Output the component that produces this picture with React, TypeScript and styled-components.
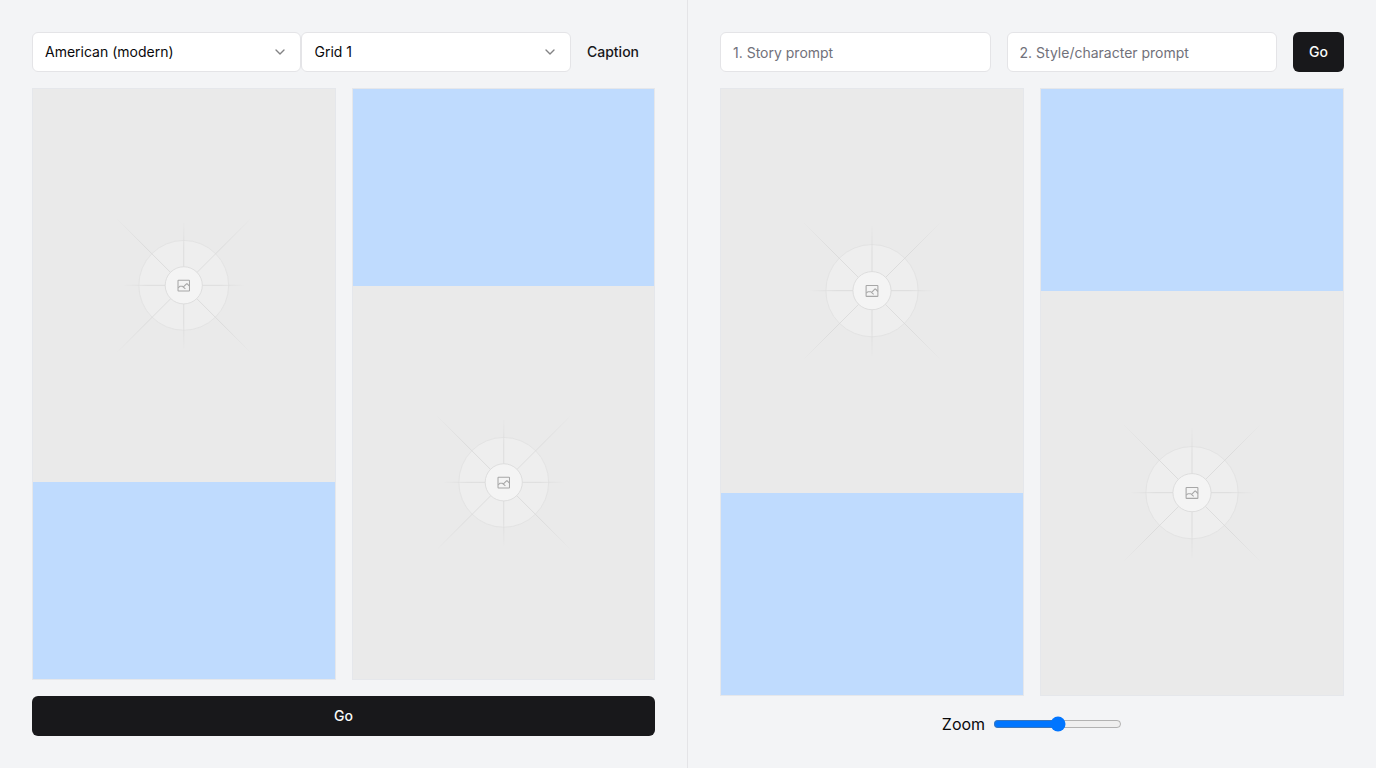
import React, { useId, useState } from "react";
import styled, { createGlobalStyle, css } from "styled-components";
import { ChevronDown } from "lucide-react";

const GlobalStyle = createGlobalStyle`
  *, *::before, *::after { box-sizing: border-box; }
  body {
    margin: 0;
    background: #f3f4f6;
    color: #09090b;
    font-family: Inter, "Liberation Sans", sans-serif;
    font-size: 16px;
    line-height: 24px;
  }
  button, input, select { font: inherit; color: inherit; margin: 0; }
`;

const Page = styled.main`
  display: grid;
  grid-template-columns: minmax(0, 1fr) minmax(0, 1fr);
  min-height: 100vh;
`;

const Panel = styled.section<{ $divided?: boolean }>`
  display: flex;
  flex-direction: column;
  gap: 16px;
  padding: 32px;
  border-right: ${(p) => (p.$divided ? "1px solid #e4e4e7" : "none")};
`;

const Toolbar = styled.form<{ $gap: number }>`
  display: flex;
  gap: ${(p) => p.$gap}px;
`;

const field = css`
  width: 100%;
  height: 40px;
  padding: 0 12px;
  border: 1px solid #e4e4e7;
  border-radius: 6px;
  background: #fff;
  font-size: 14px;
  line-height: 20px;
`;

const SelectBox = styled.div`
  position: relative;
  flex: 1 1 0;
  min-width: 0;

  svg {
    position: absolute;
    top: 12px;
    right: 13px;
    opacity: 0.5;
    pointer-events: none;
  }
`;

const Select = styled.select`
  ${field}
  display: block;
  appearance: none;
`;

const TextField = styled.input`
  ${field}
  flex: 1 1 0;
  min-width: 0;
  padding: 1px 12px 0;

  &::placeholder { color: #71717a; opacity: 1; }
`;

const Button = styled.button<{ $ghost?: boolean }>`
  height: 40px;
  padding: 0 16px;
  border: 0;
  border-radius: 6px;
  background: ${(p) => (p.$ghost ? "transparent" : "#18181b")};
  color: ${(p) => (p.$ghost ? "#18181b" : "#fafafa")};
  font-size: 14px;
  font-weight: 500;
  line-height: 20px;
  cursor: pointer;
`;

const Board = styled.div`
  flex: 1;
  display: grid;
  grid-template-columns: repeat(2, minmax(0, 1fr));
  gap: 16px;
  min-height: 320px;
`;

const Strip = styled.div<{ $captionFirst?: boolean }>`
  display: grid;
  grid-template-rows: ${(p) =>
    p.$captionFirst ? "minmax(0, 1fr) minmax(0, 2fr)" : "minmax(0, 2fr) minmax(0, 1fr)"};
  border: 1px solid #e5e7eb;
`;

const Frame = styled.div`
  min-height: 0;
  overflow: hidden;
  background: #eaeaea;
`;

const CaptionArea = styled.div`
  background: #bfdbfe;
`;

const Art = styled.svg`
  display: block;
  width: 100%;
  height: 100%;
`;

const ZoomRow = styled.div`
  display: flex;
  align-items: center;
  justify-content: center;
  gap: 8px;
`;

const Slider = styled.input`
  width: 129px;
  height: 16px;
`;

function Placeholder() {
  const id = useId().replace(/[^a-zA-Z0-9]/g, "");
  const rays = [
    [416, 599, 784, 599],
    [600, 404, 600, 796],
    [396, 396, 804, 804],
    [396, 804, 804, 396],
  ];
  return (
    <Art viewBox="0 0 1200 1200" preserveAspectRatio="xMidYMid slice" fill="none" role="img" aria-label="Empty picture">
      <defs>
        {rays.map(([x1, y1, x2, y2], i) => (
          <linearGradient key={i} id={`${id}r${i}`} x1={x1} y1={y1} x2={x2} y2={y2} gradientUnits="userSpaceOnUse">
            <stop stopColor="#C9C9C9" stopOpacity="0" />
            <stop offset=".208" stopColor="#C9C9C9" />
            <stop offset=".792" stopColor="#C9C9C9" />
            <stop offset="1" stopColor="#C9C9C9" stopOpacity="0" />
          </linearGradient>
        ))}
      </defs>
      <rect width="1200" height="1200" fill="#EAEAEA" />
      <g opacity=".5">
        <g opacity=".5">
          <circle cx="600" cy="599" r="137.5" fill="#FAFAFA" />
          <circle cx="600" cy="599" r="137" stroke="#C9C9C9" strokeWidth="2.418" />
        </g>
        {rays.map(([x1, y1, x2, y2], i) => (
          <path key={i} d={`M${x1} ${y1}L${x2} ${y2}`} stroke={`url(#${id}r${i})`} strokeWidth="2.418" />
        ))}
        <circle cx="600" cy="599" r="56.6" fill="#fff" stroke="#C9C9C9" strokeWidth="2.418" />
        <g stroke="#666" strokeWidth="3.2">
          <rect x="582.5" y="583.5" width="35" height="32.5" rx="1.5" />
          <path d="M583 606.5l5-4.5h8l9 8M599 604l9.5-9.5h2l7 7" />
        </g>
      </g>
    </Art>
  );
}

function ComicBoard() {
  return (
    <Board>
      <Strip>
        <Frame><Placeholder /></Frame>
        <CaptionArea />
      </Strip>
      <Strip $captionFirst>
        <CaptionArea />
        <Frame><Placeholder /></Frame>
      </Strip>
    </Board>
  );
}

function Picker({ label, options }: { label: string; options: string[] }) {
  return (
    <SelectBox>
      <Select aria-label={label}>
        {options.map((option) => <option key={option}>{option}</option>)}
      </Select>
      <ChevronDown size={16} aria-hidden />
    </SelectBox>
  );
}

export default function App() {
  const [zoom, setZoom] = useState(50);
  return (
    <>
      <GlobalStyle />
      <Page>
        <Panel $divided>
          <Toolbar $gap={0} onSubmit={(e) => e.preventDefault()}>
            <Picker label="Style" options={["American (modern)"]} />
            <Picker label="Layout" options={["Grid 1"]} />
            <Button type="button" $ghost>Caption</Button>
          </Toolbar>
          <ComicBoard />
          <Button type="button">Go</Button>
        </Panel>
        <Panel>
          <Toolbar $gap={16} onSubmit={(e) => e.preventDefault()}>
            <TextField aria-label="Story prompt" placeholder="1. Story prompt" />
            <TextField aria-label="Style or character prompt" placeholder="2. Style/character prompt" />
            <Button type="submit">Go</Button>
          </Toolbar>
          <ComicBoard />
          <ZoomRow>
            <label htmlFor="zoom">Zoom</label>
            <Slider id="zoom" type="range" value={zoom} onChange={(e) => setZoom(Number(e.target.value))} />
          </ZoomRow>
        </Panel>
      </Page>
    </>
  );
}
